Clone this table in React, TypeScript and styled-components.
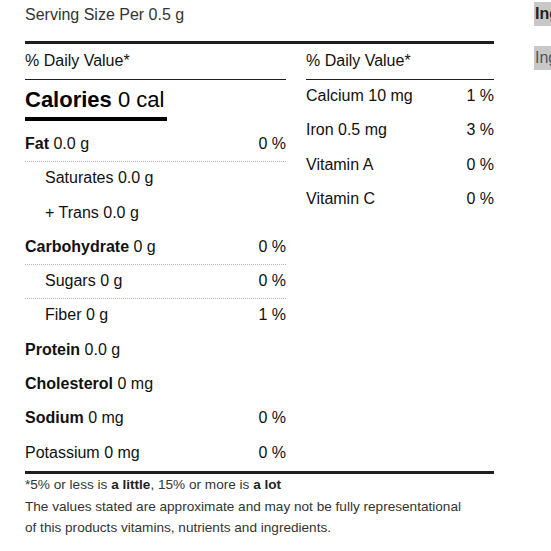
import React from "react";
import styled, { createGlobalStyle } from "styled-components";

const GlobalStyle = createGlobalStyle`
  html, body {
    margin: 0;
    padding: 0;
    background: #ffffff;
    overflow: hidden;
  }
  body {
    font-family: "Liberation Sans", Arial, Helvetica, sans-serif;
    color: #111;
  }
`;

const Page = styled.div`
  display: flex;
  align-items: flex-start;
  gap: 40px;
  padding-left: 25px;
  width: 700px;
`;

const Label = styled.section`
  width: 469px;
  flex: none;
  padding-top: 5px;
`;

const Serving = styled.div`
  font-size: 16px;
  line-height: 20px;
  color: #333;
  margin-bottom: 16px;
`;

const Columns = styled.div`
  display: grid;
  grid-template-columns: 261px 188px;
  column-gap: 20px;
  align-items: start;
  border-top: 3px solid #1e1e1e;
`;

const Column = styled.div`
  display: flex;
  flex-direction: column;
`;

const Heading = styled.div`
  font-size: 16px;
  line-height: 20px;
  padding: 6.5px 0 8.5px;
  border-bottom: 1px solid #1e1e1e;
`;

const Calories = styled.div`
  width: fit-content;
  font-size: 22px;
  line-height: 26px;
  margin-top: 7px;
  margin-bottom: 7px;
  padding-right: 3px;
  padding-bottom: 4px;
  border-bottom: 4px solid #000;
  color: #000;
  b {
    font-weight: 700;
  }
`;

const Row = styled.div<{ $indent?: boolean; $rule?: boolean }>`
  display: flex;
  justify-content: space-between;
  font-size: 16px;
  line-height: 20.3px;
  padding: 6px 0 7px ${(p) => (p.$indent ? "20px" : "0")};
  border-bottom: 1px dotted ${(p) => (p.$rule ? "#b4b4b4" : "transparent")};
  b {
    font-weight: 700;
  }
`;

const Footer = styled.footer`
  border-top: 3px solid #1e1e1e;
  font-size: 13.6px;
  line-height: 21px;
  color: #333;
  b {
    font-weight: 700;
    color: #222;
  }
`;

const Note = styled.p<{ $gap?: number }>`
  max-width: 445px;
  margin: ${(p) => p.$gap ?? 0}px 0 0;
`;

const Sidebar = styled.nav`
  flex: none;
  display: flex;
  flex-direction: column;
  gap: 20px;
  padding-top: 2px;
`;

const Tab = styled.div<{ $active?: boolean }>`
  width: 140px;
  background: #c8c8c8;
  font-size: 16px;
  line-height: 24px;
  padding-left: 1px;
  white-space: nowrap;
  font-weight: ${(p) => (p.$active ? 700 : 400)};
  color: ${(p) => (p.$active ? "#222" : "#555")};
`;

type Item = { bold?: string; text: string; pct?: string; indent?: boolean; rule?: boolean };

const leftRows: Item[] = [
  { bold: "Fat", text: "0.0 g", pct: "0 %", rule: true },
  { text: "Saturates 0.0 g", indent: true },
  { text: "+ Trans 0.0 g", indent: true },
  { bold: "Carbohydrate", text: "0 g", pct: "0 %", rule: true },
  { text: "Sugars 0 g", pct: "0 %", indent: true, rule: true },
  { text: "Fiber 0 g", pct: "1 %", indent: true },
  { bold: "Protein", text: "0.0 g" },
  { bold: "Cholesterol", text: "0 mg" },
  { bold: "Sodium", text: "0 mg", pct: "0 %" },
  { text: "Potassium 0 mg", pct: "0 %" },
];

const rightRows: Item[] = [
  { text: "Calcium 10 mg", pct: "1 %" },
  { text: "Iron 0.5 mg", pct: "3 %" },
  { text: "Vitamin A", pct: "0 %" },
  { text: "Vitamin C", pct: "0 %" },
];

const NutrientRow = ({ item }: { item: Item }) => (
  <Row $indent={item.indent} $rule={item.rule}>
    <span>
      {item.bold && <b>{item.bold}</b>}
      {item.bold ? " " : ""}
      {item.text}
    </span>
    {item.pct && <span>{item.pct}</span>}
  </Row>
);

export default function App() {
  return (
    <>
      <GlobalStyle />
      <Page>
        <Label>
          <Serving>Serving Size Per 0.5 g</Serving>
          <Columns>
            <Column>
              <Heading>% Daily Value*</Heading>
              <Calories>
                <b>Calories</b> 0 cal
              </Calories>
              {leftRows.map((r, i) => (
                <NutrientRow key={i} item={r} />
              ))}
            </Column>
            <Column>
              <Heading>% Daily Value*</Heading>
              {rightRows.map((r, i) => (
                <NutrientRow key={i} item={r} />
              ))}
            </Column>
          </Columns>
          <Footer>
            <Note>
              *5% or less is <b>a little</b>, 15% or more is <b>a lot</b>
            </Note>
            <Note $gap={1}>
              The values stated are approximate and may not be fully representational of this
              products vitamins, nutrients and ingredients.
            </Note>
          </Footer>
        </Label>
        <Sidebar>
          <Tab $active>Ingredients</Tab>
          <Tab>Ingredients</Tab>
        </Sidebar>
      </Page>
    </>
  );
}
